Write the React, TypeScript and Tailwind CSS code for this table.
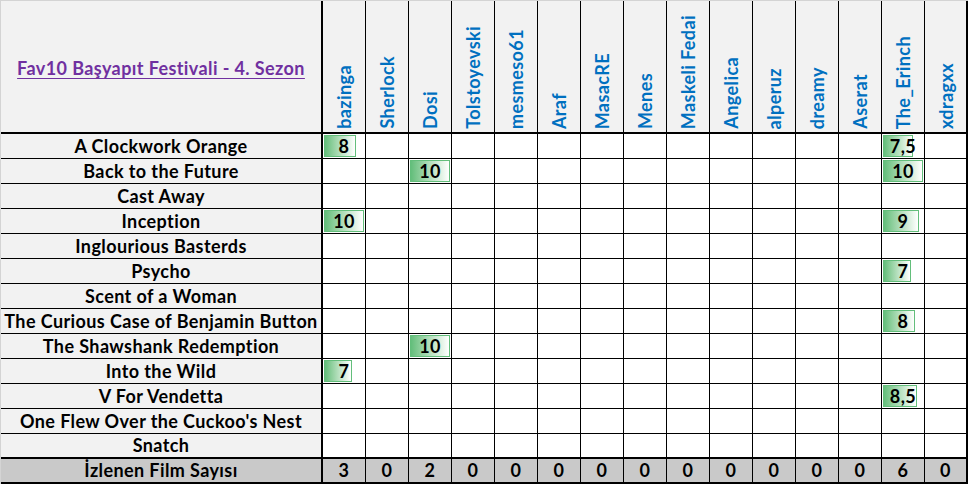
import React from "react";

const names = [
  "bazinga",
  "Sherlock",
  "Dosi",
  "Tolstoyevski",
  "mesmeso61",
  "Araf",
  "MasacRE",
  "Menes",
  "Maskeli Fedai",
  "Angelica",
  "alperuz",
  "dreamy",
  "Aserat",
  "The_Erinch",
  "xdragxx",
];

// puanlar: kolon index -> puan
const films: { title: string; scores: Record<number, number> }[] = [
  { title: "A Clockwork Orange", scores: { 0: 8, 13: 7.5 } },
  { title: "Back to the Future", scores: { 2: 10, 13: 10 } },
  { title: "Cast Away", scores: {} },
  { title: "Inception", scores: { 0: 10, 13: 9 } },
  { title: "Inglourious Basterds", scores: {} },
  { title: "Psycho", scores: { 13: 7 } },
  { title: "Scent of a Woman", scores: {} },
  { title: "The Curious Case of Benjamin Button", scores: { 13: 8 } },
  { title: "The Shawshank Redemption", scores: { 2: 10 } },
  { title: "Into the Wild", scores: { 0: 7 } },
  { title: "V For Vendetta", scores: { 13: 8.5 } },
  { title: "One Flew Over the Cuckoo's Nest", scores: {} },
  { title: "Snatch", scores: {} },
];

const font = "font-['Lato','Liberation_Sans',sans-serif]";

function ScoreCell({ value, last }: { value?: number; last: boolean }) {
  return (
    <div
      className={`relative w-[43px] h-full flex items-center justify-center bg-white border-black ${
        last ? "border-r-2" : "border-r"
      }`}
    >
      {value !== undefined && (
        <>
          <div
            className="absolute left-[1px] top-[1px] bottom-[1px] border border-[#63be7b] bg-gradient-to-r from-[#63be7b] to-white"
            style={{ width: value * 4 }}
          />
          <span className="relative text-black">{String(value).replace(".", ",")}</span>
        </>
      )}
    </div>
  );
}

export default function App() {
  const totals = names.map((_, i) => films.filter((f) => f.scores[i] !== undefined).length);

  return (
    <div className={`w-[968px] h-[484px] overflow-hidden bg-white border-t border-l border-[#d4d4d4] ${font} font-bold text-[18px] tracking-[0.4px]`}>
      <div className="flex h-[133px] border-b-2 border-black bg-[#f2f2f2]">
        <div className="w-[322px] h-full border-r-2 border-black flex items-center justify-center pt-[4px]">
          <span className="text-[#7030a0] underline underline-offset-[3px] decoration-1">Fav10 Başyapıt Festivali - 4. Sezon</span>
        </div>
        {names.map((n, i) => (
          <div
            key={n}
            className={`w-[43px] h-full flex items-end justify-center pb-[3px] border-black ${
              i === names.length - 1 ? "border-r-2" : "border-r"
            }`}
          >
            <span className="[writing-mode:vertical-rl] rotate-180 text-[#0070c0] leading-none whitespace-nowrap">{n}</span>
          </div>
        ))}
      </div>

      {films.map((f, r) => (
        <div
          key={f.title}
          className={`flex h-[25px] border-black ${r === films.length - 1 ? "border-b-2" : "border-b"}`}
        >
          <div className="w-[322px] h-full border-r-2 border-black bg-[#f2f2f2] flex items-center justify-center text-black whitespace-nowrap">
            {f.title}
          </div>
          {names.map((n, i) => (
            <ScoreCell key={n} value={f.scores[i]} last={i === names.length - 1} />
          ))}
        </div>
      ))}

      <div className="flex h-[25px] border-b-2 border-black bg-[#c9c9c9]">
        <div className="w-[322px] h-full border-r-2 border-black flex items-center justify-center text-black">
          İzlenen Film Sayısı
        </div>
        {totals.map((t, i) => (
          <div
            key={i}
            className={`w-[43px] h-full flex items-center justify-center text-black border-black ${
              i === totals.length - 1 ? "border-r-2" : "border-r"
            }`}
          >
            {t}
          </div>
        ))}
      </div>
    </div>
  );
}
